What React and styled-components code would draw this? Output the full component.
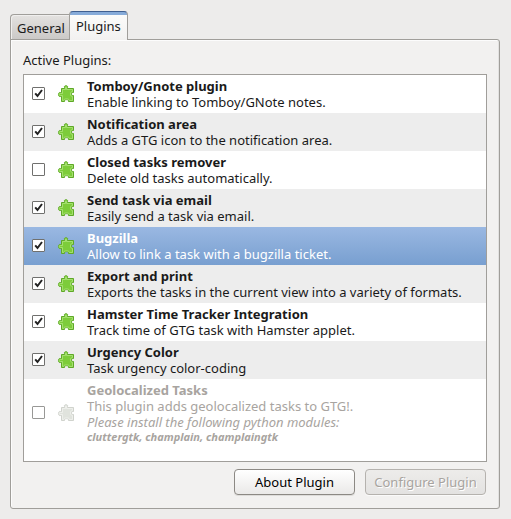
import React, { useState } from "react";
import styled, { createGlobalStyle, css } from "styled-components";

const GlobalStyle = createGlobalStyle`
  *, *::before, *::after { box-sizing: border-box; }
  body {
    margin: 0;
    background: #edeceb;
    color: #1a1a1a;
    font-family: "Noto Sans", "Open Sans", sans-serif;
    font-size: 13px;
    line-height: 16px;
  }
`;

const Window = styled.main`
  padding: 11px 11px 10px 10px;
`;

const TabBar = styled.div`
  display: flex;
  align-items: flex-end;
  height: 29px;
  margin-bottom: -1px;
`;

const Tab = styled.button`
  position: relative;
  height: 26px;
  padding: 2px 4px 0 6px;
  border: 1px solid #a09e9a;
  border-right: 0;
  border-radius: 4px 0 0 0;
  background: linear-gradient(#e4e2e0, #cbc9c7);
  box-shadow: inset 1px 1px 0 #f0efee;
  color: #1a1a1a;
  font: inherit;
  white-space: nowrap;

  ${({ $active }) =>
    $active &&
    css`
      height: 29px;
      padding: 0 6px;
      border: 1px solid #a09e9a;
      border-top: 1px solid #3f5f90;
      border-bottom: 0;
      border-radius: 4px 4px 0 0;
      background: linear-gradient(#86abd9 3px, #fbfbfa 3px, #f2f1f0);
      box-shadow: none;
    `}
`;

const Panel = styled.section`
  padding: 12px 12px 13px;
  border: 1px solid #a09e9a;
  border-radius: 0 3px 3px 3px;
  background: #f2f1f0;
  box-shadow: inset 1px 1px 0 #fcfcfc, inset -1px 0 0 #e2e1e0;
`;

const Heading = styled.h1`
  margin: 0 0 6px;
  font-size: 13px;
  font-weight: 400;
  line-height: 16px;
`;

const PluginList = styled.ul`
  min-height: 388px;
  margin: 0 0 7px;
  padding: 0;
  border: 1px solid #a09e9a;
  background: #ffffff;
  list-style: none;
`;

const PluginRow = styled.li`
  background: #ffffff;

  &:nth-child(even) { background: #ededed; }

  ${({ $selected }) =>
    $selected &&
    css`
      && { background: linear-gradient(#9ab8e2, #789fd0); }
      color: #ffffff;
    `}

  ${({ $unavailable }) => $unavailable && css`color: #a8a4a0;`}
`;

const RowLabel = styled.label`
  display: grid;
  grid-template-columns: 13px 18px 1fr;
  align-items: center;
  column-gap: 12px;
  padding: 3px 8px;
`;

const CheckBox = styled.input`
  appearance: none;
  width: 13px;
  height: 13px;
  margin: 0 0 1px;
  border: 1px solid #70706e;
  border-radius: 1px;
  background: #ffffff;

  &:checked {
    background: #ffffff url("data:image/svg+xml,%3Csvg xmlns='http://www.w3.org/2000/svg' viewBox='0 0 11 11'%3E%3Cpath d='M2.2 5.4L4.5 8L9 2' fill='none' stroke='%23222' stroke-width='2'/%3E%3C/svg%3E") center / 11px 11px no-repeat;
  }

  &:disabled { border-color: #989896; }
`;

const PuzzleSvg = styled.svg`
  display: block;
  width: 18px;
  height: 18px;
`;

const Details = styled.span`
  display: grid;
`;

const Name = styled.strong`
  font-weight: 700;
`;

const Description = styled.span``;

const Notice = styled.em`
  font-style: italic;
`;

const Modules = styled.em`
  font-size: 11px;
  font-weight: 700;
  line-height: 14px;
`;

const Actions = styled.div`
  display: grid;
  grid-template-columns: 121px 121px;
  justify-content: end;
  column-gap: 10px;
  padding-right: 1px;
`;

const ActionButton = styled.button`
  height: 26px;
  padding: 0;
  border: 1px solid #8c8984;
  border-radius: 4px;
  background: linear-gradient(#ffffff, #eae9e8);
  box-shadow: 0 1px 0 #dddcda;
  color: #000000;
  font: inherit;
  white-space: nowrap;

  &:disabled {
    border-color: #b5b2ae;
    background: linear-gradient(#edecea, #e3e2e1);
    box-shadow: 0 1px 0 #fafafa;
    color: #a8a4a0;
    text-shadow: 1px 1px 0 #ffffff;
  }
`;

const shape =
  "M4.5 3.5H7.5V2.5C6.2 .2 11.8 .2 10.5 2.5V3.5H16.5V7.5H15.5C14.2 7.3 14.2 10.7 15.5 10.5H16.5V16.5H11.5V15.5C11.3 14.4 7.7 14.4 7.5 15.5V16.5H4.5V11.5H3.5C.8 12.4 .8 6.6 3.5 7.5H4.5Z";

const colours = {
  normal: { edge: "#5fa828", fill: "#7dcc3a", shine: "#aee47c" },
  faded: { edge: "#d0d3cd", fill: "#e0e3dd", shine: "#f1f3ef" },
};

function PuzzleIcon({ faded }) {
  const { edge, fill, shine } = faded ? colours.faded : colours.normal;
  return (
    <PuzzleSvg viewBox="0 0 18 18" aria-hidden="true">
      <path d={shape} fill={fill} stroke={edge} strokeLinejoin="round" />
      <path
        d="M5.5 8.5V4.5H8.5V2.3C8.5 1.6 9.5 1.6 9.5 2.3V4.5H15.5V6.5C12.8 6.2 12.8 11.8 15.5 11.5V15.5H12.5C12.5 13.4 6.5 13.4 6.5 15.5H5.5V10.5H3.2C2 10.7 2 8.3 3.2 8.5H5.5"
        fill="none"
        stroke={shine}
        strokeWidth="0.8"
      />
    </PuzzleSvg>
  );
}

const plugins = [
  { name: "Tomboy/Gnote plugin", text: "Enable linking to Tomboy/GNote notes.", on: true },
  { name: "Notification area", text: "Adds a GTG icon to the notification area.", on: true },
  { name: "Closed tasks remover", text: "Delete old tasks automatically.", on: false },
  { name: "Send task via email", text: "Easily send a task via email.", on: true },
  { name: "Bugzilla", text: "Allow to link a task with a bugzilla ticket.", on: true, selected: true },
  { name: "Export and print", text: "Exports the tasks in the current view into a variety of formats.", on: true },
  { name: "Hamster Time Tracker Integration", text: "Track time of GTG task with Hamster applet.", on: true },
  { name: "Urgency Color", text: "Task urgency color-coding", on: true },
  {
    name: "Geolocalized Tasks",
    text: "This plugin adds geolocalized tasks to GTG!.",
    on: false,
    notice: "Please install the following python modules:",
    modules: "cluttergtk, champlain, champlaingtk",
  },
];

function Plugin({ plugin }) {
  const [enabled, setEnabled] = useState(plugin.on);
  const unavailable = Boolean(plugin.modules);
  return (
    <PluginRow $selected={plugin.selected} $unavailable={unavailable}>
      <RowLabel>
        <CheckBox
          type="checkbox"
          checked={enabled}
          disabled={unavailable}
          onChange={(event) => setEnabled(event.target.checked)}
        />
        <PuzzleIcon faded={unavailable} />
        <Details>
          <Name>{plugin.name}</Name>
          <Description>{plugin.text}</Description>
          {plugin.notice && <Notice>{plugin.notice}</Notice>}
          {plugin.modules && <Modules>{plugin.modules}</Modules>}
        </Details>
      </RowLabel>
    </PluginRow>
  );
}

export default function App() {
  return (
    <>
      <GlobalStyle />
      <Window>
        <TabBar role="tablist">
          <Tab type="button" role="tab" aria-selected="false">General</Tab>
          <Tab type="button" role="tab" aria-selected="true" $active>Plugins</Tab>
        </TabBar>
        <Panel role="tabpanel">
          <Heading>Active Plugins:</Heading>
          <PluginList>
            {plugins.map((plugin) => (
              <Plugin key={plugin.name} plugin={plugin} />
            ))}
          </PluginList>
          <Actions>
            <ActionButton type="button">About Plugin</ActionButton>
            <ActionButton type="button" disabled>Configure Plugin</ActionButton>
          </Actions>
        </Panel>
      </Window>
    </>
  );
}
